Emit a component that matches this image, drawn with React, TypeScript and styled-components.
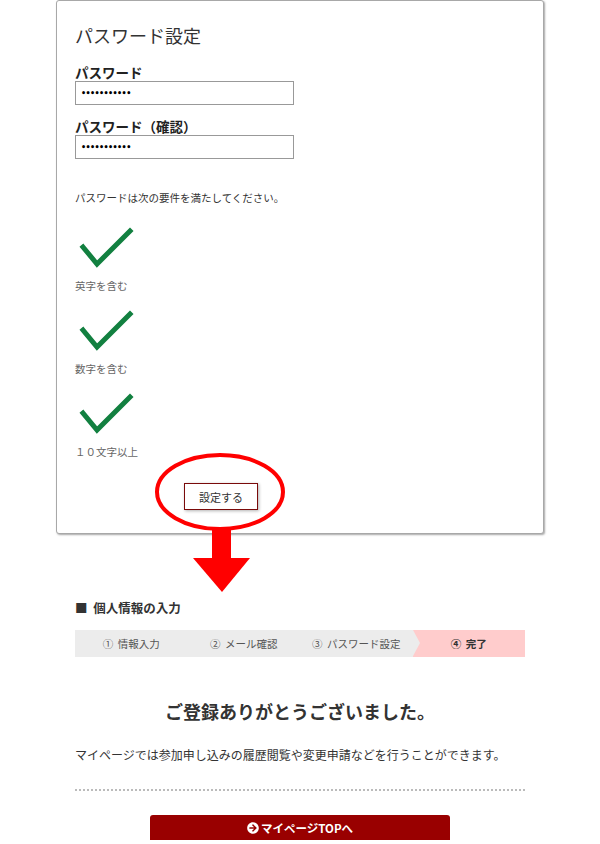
import React from 'react'
import styled, { createGlobalStyle } from 'styled-components'
import { FaArrowCircleRight } from 'react-icons/fa'

const GlobalStyle = createGlobalStyle`
  html, body {
    margin: 0;
    padding: 0;
    background: #fff;
  }
  body {
    font-family: 'Noto Sans CJK JP', 'Noto Sans', sans-serif;
    color: #333;
  }
`

const RULES = ['英字を含む', '数字を含む', '１０文字以上']
const STEPS = ['① 情報入力', '② メール確認', '③ パスワード設定', '④ 完了']

const CheckMark = () => (
  <CheckIcon viewBox="0 0 60 44" width={60} height={44}>
    <path d="M8 21 L22 38 L55 5" fill="none" stroke="#128040" strokeWidth={5} strokeLinecap="square" strokeLinejoin="miter" />
  </CheckIcon>
)

// red ellipse + arrow drawn on top of the screenshot
const Annotation = () => (
  <Overlay viewBox="0 0 140 145" width={140} height={145}>
    <ellipse cx={70} cy={42} rx={63} ry={37} fill="none" stroke="#ff0000" strokeWidth={4} />
    <rect x={62} y={77} width={19} height={32} fill="#ff0000" />
    <polygon points="43,108 100,108 72,142" fill="#ff0000" />
  </Overlay>
)

const App = () => {
  return (
    <>
      <GlobalStyle />
      <Page>
        <Card>
          <Title>パスワード設定</Title>
          <FieldLabel>パスワード</FieldLabel>
          <PasswordInput type="password" defaultValue="abcdefghijk" readOnly />
          <FieldLabel $gap>パスワード（確認）</FieldLabel>
          <PasswordInput type="password" defaultValue="abcdefghijk" readOnly />

          <Intro>パスワードは次の要件を満たしてください。</Intro>
          <RuleList>
            {RULES.map((r) => (
              <RuleItem key={r}>
                <CheckMark />
                <RuleText>{r}</RuleText>
              </RuleItem>
            ))}
          </RuleList>

          <SubmitButton type="button">設定する</SubmitButton>
        </Card>
        <Annotation />

        <Section>
          <SectionHeading>■ 個人情報の入力</SectionHeading>
          <StepBar>
            {STEPS.map((s, i) => (
              <Step key={s} $active={i === STEPS.length - 1}>
                {s}
              </Step>
            ))}
          </StepBar>

          <Thanks>ご登録ありがとうございました。</Thanks>
          <Message>マイページでは参加申し込みの履歴閲覧や変更申請などを行うことができます。</Message>
          <Divider />
          <TopButton type="button">
            <FaArrowCircleRight size={12} />
            マイページTOPへ
          </TopButton>
        </Section>
      </Page>
    </>
  )
}

export default App

const Page = styled.div`
  position: relative;
  width: 488px;
  margin: 0 auto;
  padding-bottom: 4px;
`

const Card = styled.div`
  display: flex;
  flex-direction: column;
  align-items: flex-start;
  box-sizing: border-box;
  width: 488px;
  padding: 21px 18px 23px;
  background: #fff;
  border: 1px solid #a8a8a8;
  border-radius: 3px;
  box-shadow: 1px 1px 2px rgba(0, 0, 0, 0.35);
`

const Title = styled.h2`
  margin: 0;
  font-size: 18px;
  font-weight: 400;
  line-height: 26px;
  color: #333;
`

const FieldLabel = styled.label<{ $gap?: boolean }>`
  display: block;
  margin-top: ${(p) => (p.$gap ? '12px' : '15px')};
  font-size: 13.5px;
  font-weight: 700;
  line-height: 18px;
  color: #222;
`

const PasswordInput = styled.input`
  box-sizing: border-box;
  width: 219px;
  height: 24px;
  margin: 0;
  padding: 0 5px;
  border: 1px solid #999;
  border-radius: 0;
  font-family: 'DejaVu Sans', sans-serif;
  font-size: 8px;
  font-weight: 700;
  letter-spacing: -0.6px;
  color: #000;
  outline: none;
`

const Intro = styled.p`
  margin: 31px 0 0;
  font-size: 10.5px;
  line-height: 16px;
  color: #333;
`

const RuleList = styled.ul`
  list-style: none;
  margin: 20px 0 0;
  padding: 0;
  display: flex;
  flex-direction: column;
  gap: 15px;
`

const RuleItem = styled.li`
  display: flex;
  flex-direction: column;
  gap: 8px;
`

const CheckIcon = styled.svg`
  display: block;
`

const RuleText = styled.span`
  font-size: 10.5px;
  line-height: 16px;
  color: #666;
`

const SubmitButton = styled.button`
  box-sizing: border-box;
  margin: 23px 0 0 109px;
  width: 74px;
  height: 27px;
  padding: 0;
  background: #fff;
  border: 1px solid #7a0a0a;
  box-shadow: 1px 1px 3px rgba(0, 0, 0, 0.3);
  font-family: 'Noto Sans CJK JP', sans-serif;
  font-size: 11px;
  color: #333;
  cursor: pointer;
`

const Overlay = styled.svg`
  position: absolute;
  left: 94px;
  top: 450px;
  z-index: 2;
`

const Section = styled.section`
  padding: 65px 19px 0;
`

const SectionHeading = styled.h3`
  margin: 0;
  font-size: 12.5px;
  font-weight: 700;
  line-height: 18px;
  color: #333;
  word-spacing: 3px;
`

const StepBar = styled.ol`
  display: flex;
  list-style: none;
  margin: 13px 0 0;
  padding: 0;
  height: 27px;
  background: #ececec;
`

const Step = styled.li<{ $active?: boolean }>`
  position: relative;
  flex: 1;
  display: flex;
  align-items: center;
  justify-content: center;
  font-size: 10.5px;
  font-weight: ${(p) => (p.$active ? 700 : 400)};
  color: ${(p) => (p.$active ? '#333' : '#555')};
  background: ${(p) => (p.$active ? '#ffcccc' : 'transparent')};
  word-spacing: 2px;

  &::before {
    content: '';
    display: ${(p) => (p.$active ? 'block' : 'none')};
    position: absolute;
    left: 0;
    top: 0;
    border-left: 7px solid #ececec;
    border-top: 13.5px solid transparent;
    border-bottom: 13.5px solid transparent;
  }
`

const Thanks = styled.h1`
  margin: 41px 0 0;
  text-align: center;
  font-size: 18px;
  font-weight: 700;
  line-height: 26px;
  color: #333;
`

const Message = styled.p`
  margin: 22px 0 0;
  font-size: 12px;
  line-height: 18px;
  color: #333;
`

const Divider = styled.hr`
  margin: 25px 0 0;
  border: 0;
  border-top: 2px dotted #bbb;
`

const TopButton = styled.button`
  display: flex;
  align-items: center;
  justify-content: center;
  gap: 2px;
  box-sizing: border-box;
  width: 300px;
  height: 25px;
  margin: 24px auto 0;
  padding: 0;
  background: #990000;
  border: 0;
  border-radius: 3px 3px 0 0;
  font-family: 'Noto Sans CJK JP', sans-serif;
  font-size: 11.5px;
  font-weight: 700;
  color: #fff;
  cursor: pointer;
`
